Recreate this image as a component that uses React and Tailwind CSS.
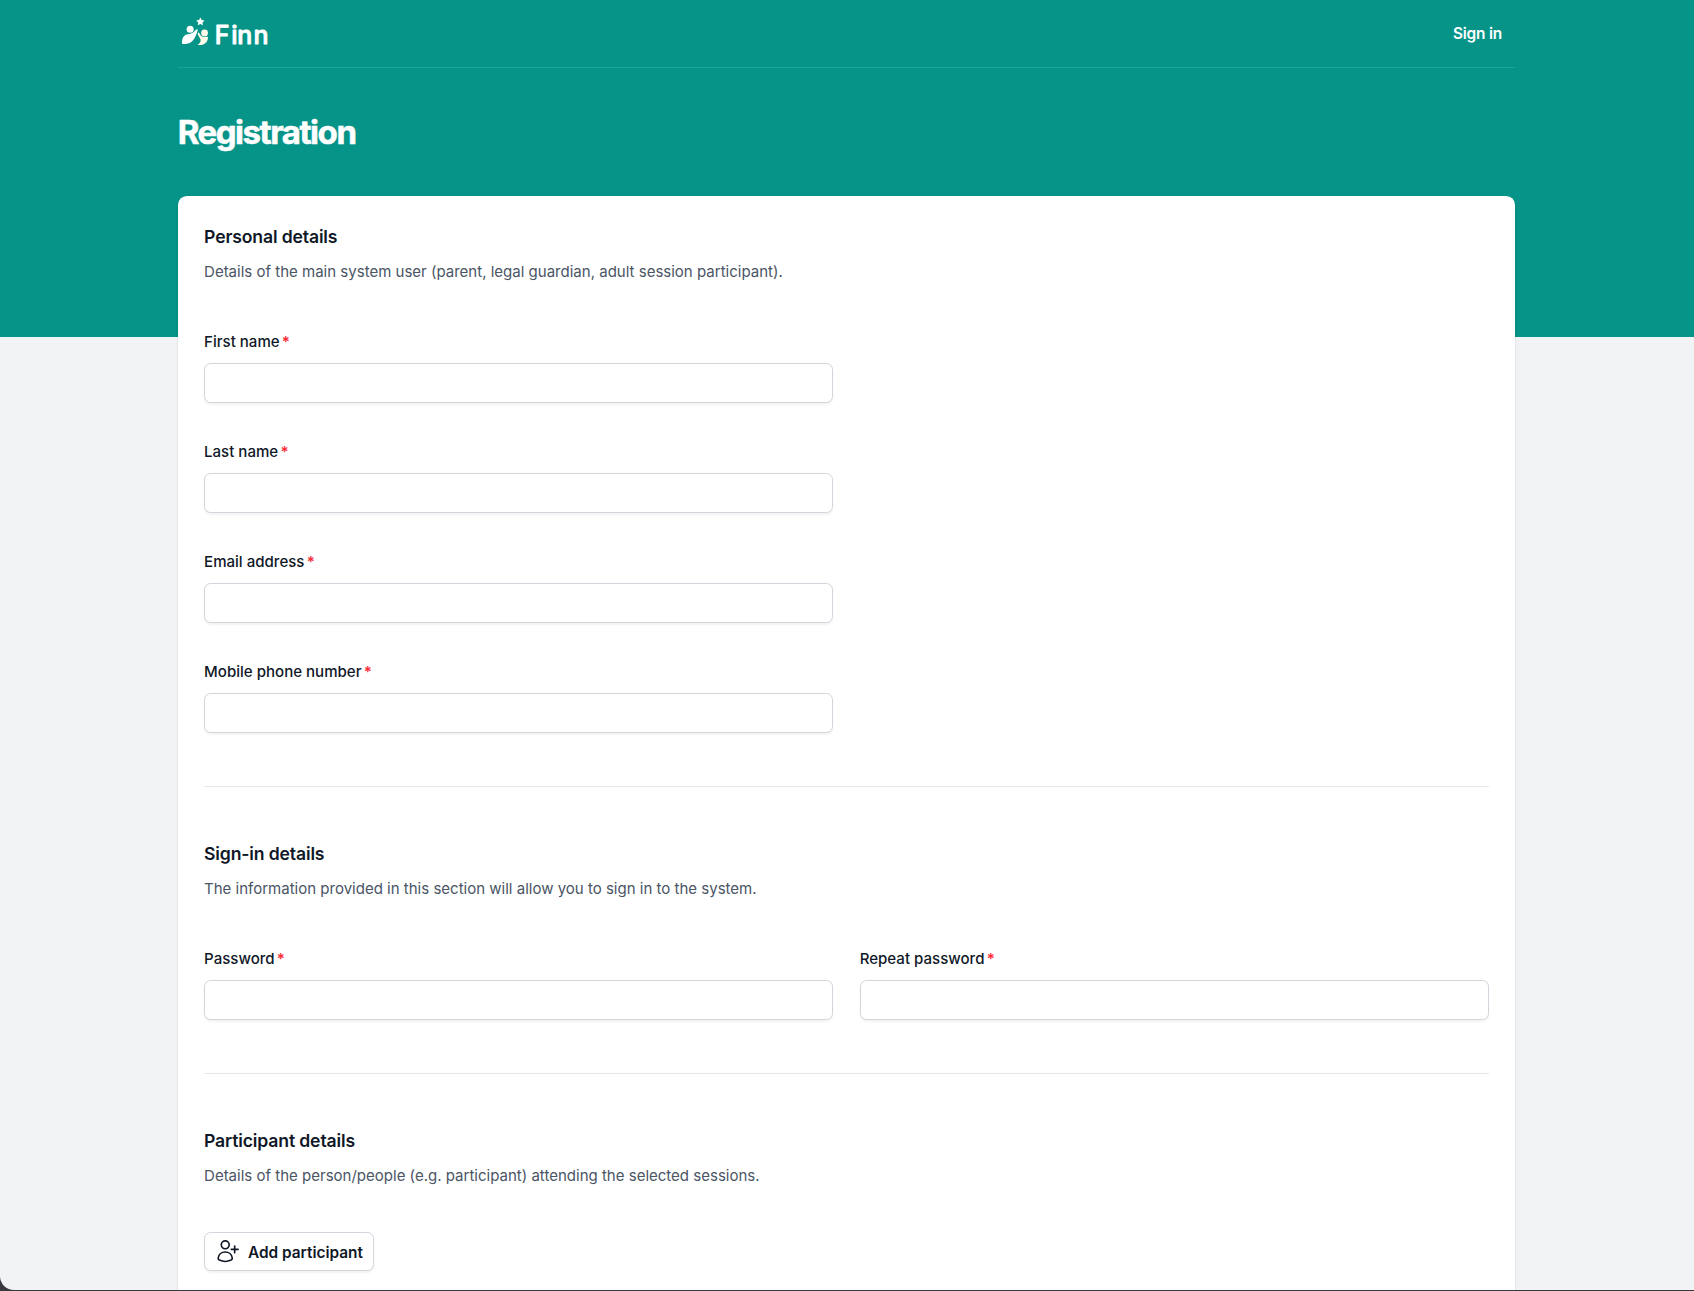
const sections = [
  {
    title: 'Personal details',
    description: 'Details of the main system user (parent, legal guardian, adult session participant).',
    rows: [
      [{ name: 'firstName', label: 'First name', type: 'text' }],
      [{ name: 'lastName', label: 'Last name', type: 'text' }],
      [{ name: 'email', label: 'Email address', type: 'email' }],
      [{ name: 'phone', label: 'Mobile phone number', type: 'tel' }],
    ],
  },
  {
    title: 'Sign-in details',
    description: 'The information provided in this section will allow you to sign in to the system.',
    rows: [
      [
        { name: 'password', label: 'Password', type: 'password' },
        { name: 'repeatPassword', label: 'Repeat password', type: 'password' },
      ],
    ],
  },
]

export default function App() {
  return (
    <div className="relative h-[1291px] overflow-hidden bg-[#39383e] font-['Inter',sans-serif]">
      <div className="h-[1290px] overflow-hidden rounded-bl-[14px] bg-[#f2f3f5]">
        <div className="[zoom:1.1]">
          <Header />
          <main className="-mt-32 pr-px">
            <form className="relative mx-auto min-h-[1100px] w-[1216px] rounded-lg bg-white p-6 shadow-sm">
              <div className="space-y-[47px]">
                {sections.map((section) => (
                  <Section key={section.title} {...section} />
                ))}
                <div>
                  <SectionHeading
                    title="Participant details"
                    description="Details of the person/people (e.g. participant) attending the selected sessions."
                  />
                  <button
                    type="button"
                    className="mt-[38.5px] flex h-9 items-center gap-1.5 rounded-md border border-[#d1d5dc] bg-white px-[9px] text-sm font-semibold text-[#101828] shadow-xs"
                  >
                    <UserPlusIcon />
                    <span className="pt-[3px]">Add participant</span>
                  </button>
                </div>
              </div>
            </form>
          </main>
        </div>
      </div>
    </div>
  )
}

function Header() {
  return (
    <div className="bg-[#079488] pr-px pb-32">
      <div className="mx-auto w-[1216px]">
        <nav className="flex h-[62px] items-center justify-between border-b border-[#17a597] pr-3 pl-[3px]">
          <Logo />
          <a href="#" className="text-sm font-semibold tracking-[-0.012em] text-white">
            Sign in
          </a>
        </nav>
        <header className="pt-[41px] pb-[39px]">
          <h1 className="text-3xl font-bold tracking-[-0.044em] text-white [-webkit-text-stroke:0.5px_white]">
            Registration
          </h1>
        </header>
      </div>
    </div>
  )
}

function Section({ title, description, rows }) {
  return (
    <div className="border-b border-[#e5e7eb] pb-[49px]">
      <SectionHeading title={title} description={description} />
      <div className="mt-[38.5px] space-y-8">
        {rows.map((fields) => (
          <div key={fields[0].name} className="grid grid-cols-2 gap-x-6">
            {fields.map((field) => (
              <Field key={field.name} {...field} />
            ))}
          </div>
        ))}
      </div>
    </div>
  )
}

function SectionHeading({ title, description }) {
  return (
    <>
      <h2 className="text-base leading-7 font-semibold tracking-[-0.008em] text-[#101828]">{title}</h2>
      <p className="mt-[5.5px] text-[13.67px] leading-6 text-[#4a5565]">{description}</p>
    </>
  )
}

function Field({ name, label, type }) {
  return (
    <div>
      <label
        htmlFor={name}
        className="block pt-0.5 text-[13.7px] leading-[22px] font-medium text-[#101828]"
      >
        {label}
        <span className="ml-0.5 font-semibold text-[#fb2c36]">*</span>
      </label>
      <input
        id={name}
        name={name}
        type={type}
        className="mt-2 -mb-[0.3px] block h-[36.3px] w-full rounded-md border border-[#d1d5dc] bg-white px-3 text-sm shadow-xs"
      />
    </div>
  )
}

function Logo() {
  return (
    <svg width="92" height="32" viewBox="0 0 92 32" fill="none">
      <g transform="translate(0.4 0)">
        <g className="fill-white">
          <path d="M17.2 1.300l1.200 2.300 2.600.4-1.900 1.800.5 2.700-2.400-1.200-2.400 1.200.5-2.700-1.900-1.800 2.600-.4z" />
          <circle cx="7.900" cy="12.100" r="3.200" />
          <path d="M.6 25.300c-.5-4.500 1.200-8.300 5.200-8.700 3.800-.3 5.600-1.900 7.400-4 .9-1 1.900-.6 1.500.6-.9 3.100-1.900 5.700-3.700 8.400-2.100 3.100-6 4.300-10.400 3.700z" />
        </g>
        <g className="fill-yellow-50">
          <circle cx="21" cy="15.400" r="3.100" />
          <path d="M14.800 15.500c.4-.8 1.100-.6 1.400.1.900 2.100 2.400 3.500 4.700 3.500 1.100 0 2.200-.3 3.200 0 .3 4.700-4.100 8.300-9.500 7.100 2.100-1.300 3.300-2.700 2.700-5-.4-1.700-2.500-3.100-2.500-5.700z" />
        </g>
      </g>
      <text
        x="30.8 45.600 51.200 65.900"
        y="25.200"
        className="fill-white stroke-white font-['Inter',sans-serif] text-[22.700px] font-medium"
        strokeWidth="0.8"
        strokeLinejoin="round"
      >
        Finn
      </text>
    </svg>
  )
}

function UserPlusIcon() {
  return (
    <svg
      className="size-6"
      viewBox="0 0 24 24"
      fill="none"
      stroke="currentColor"
      strokeWidth="1.5"
      strokeLinecap="round"
      strokeLinejoin="round"
    >
      <circle cx="9.300" cy="6.200" r="3.600" />
      <path d="M9.300 12.700c-3.300 0-6 2.300-6.400 5.500-.1.900.3 1.500 1.100 1.900 3.200 1.500 7.400 1.500 10.600 0 .8-.4 1.200-1 1.100-1.900-.4-3.200-3.100-5.500-6.400-5.500z" />
      <path d="M17.900 7.300v6.200M14.800 10.400h6.200" />
    </svg>
  )
}
